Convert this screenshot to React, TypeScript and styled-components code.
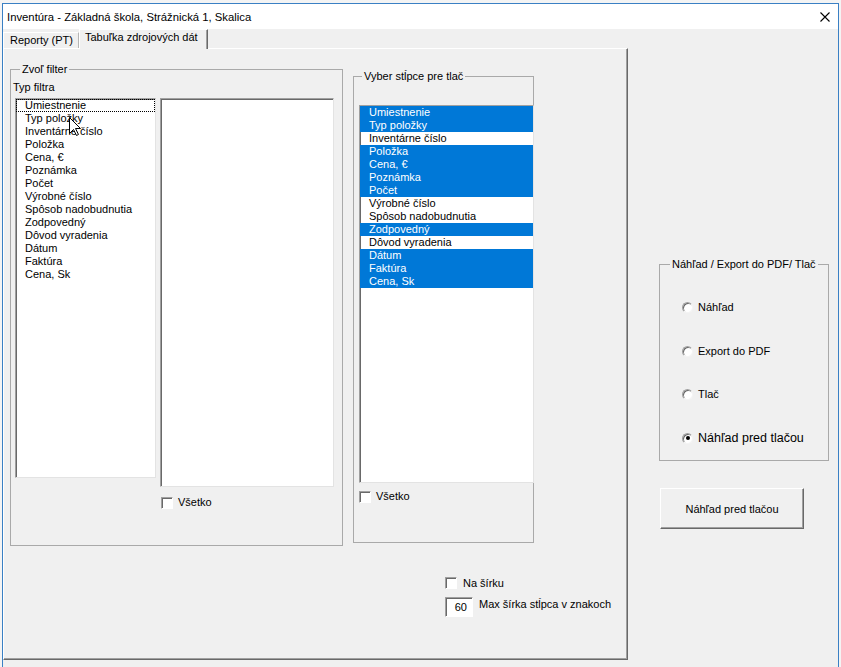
import React from 'react';
import styled, { createGlobalStyle } from 'styled-components';

const Global = createGlobalStyle`
  html, body { margin: 0; padding: 0; }
  body {
    background: #f3f3f3;
    font-family: "Liberation Sans", Arial, sans-serif;
    font-size: 11px;
    color: #000;
  }
`;

const Screen = styled.div`
  width: 841px;
  height: 667px;
  overflow: hidden;
  box-sizing: border-box;
  padding: 3px 2px 0 2px;
  background: #f4f4f4;
`;

const Window = styled.div`
  width: 837px;
  height: 700px;
  box-sizing: border-box;
  border: 1px solid #3a80c4;
  border-bottom: none;
  display: flex;
  flex-direction: column;
  background: #f0f0f0;
`;

const TitleBar = styled.div`
  height: 25px;
  flex: none;
  background: #fff;
  display: flex;
  align-items: center;
  padding-left: 4px;
  padding-right: 8px;
`;

const TitleText = styled.div`
  flex: 1;
  font-size: 11.3px;
  line-height: 14px;
  padding-top: 1px;
`;

const CloseIcon = () => (
  <svg width="10" height="10" viewBox="0 0 10 10">
    <path d="M0.5 0.5 L9.5 9.5 M9.5 0.5 L0.5 9.5" stroke="#000" strokeWidth="1.1" />
  </svg>
);

const Body = styled.div`
  flex: 1;
  display: flex;
  align-items: flex-start;
`;

const TabControl = styled.div`
  width: 625px;
  flex: none;
  display: flex;
  flex-direction: column;
`;

const TabStrip = styled.div`
  height: 19px;
  display: flex;
  align-items: flex-end;
  position: relative;
  z-index: 1;
`;

const Tab = styled.div<{ $active?: boolean }>`
  box-sizing: border-box;
  background: #f0f0f0;
  border-top: 1px solid #fff;
  border-left: 1px solid #fff;
  border-right: 1px solid ${p => (p.$active ? '#696969' : '#b5b5b5')};
  box-shadow: ${p => (p.$active ? 'inset -1px 0 0 #a0a0a0' : 'none')};
  height: ${p => (p.$active ? '20px' : '16px')};
  width: ${p => (p.$active ? '129px' : '76px')};
  margin-bottom: ${p => (p.$active ? '-1px' : '0')};
  padding: ${p => (p.$active ? '1px 0 0 5px' : '1px 0 0 6px')};
  line-height: 13px;
  white-space: nowrap;
`;

const Page = styled.div`
  height: 612px;
  box-sizing: border-box;
  border-top: 1px solid #fff;
  border-left: 1px solid #fff;
  border-right: 1px solid #696969;
  border-bottom: 1px solid #696969;
  box-shadow: inset -1px -1px 0 #a0a0a0;
  display: flex;
  align-items: flex-start;
  padding-left: 6px;
`;

const Frame = styled.fieldset<{ $w: number; $h: number; $mt: number; $ml?: number }>`
  box-sizing: border-box;
  width: ${p => p.$w}px;
  height: ${p => p.$h}px;
  margin: ${p => p.$mt}px 0 0 ${p => p.$ml ?? 0}px;
  padding: 0;
  min-width: 0;
  border: 1px solid #a9a9a9;
  flex: none;
`;

const Legend = styled.legend<{ $ml: number }>`
  margin-left: ${p => p.$ml}px;
  padding: 0 2px;
  line-height: 13px;
  font-size: 11px;
`;

const FieldLabel = styled.div`
  line-height: 13px;
  padding: 5px 0 0 2px;
`;

const ListRow = styled.div`
  display: flex;
  align-items: flex-start;
  gap: 4px;
  padding: 4px 0 0 4px;
`;

const ListColumn = styled.div`
  display: flex;
  flex-direction: column;
`;

const ListBox = styled.div<{ $w: number; $h: number; $mr?: number }>`
  position: relative;
  box-sizing: border-box;
  width: ${p => p.$w}px;
  height: ${p => p.$h}px;
  margin-right: ${p => p.$mr ?? 0}px;
  background: #fff;
  border: 1px solid;
  border-color: #a0a0a0 #e3e3e3 #e3e3e3 #a0a0a0;
  box-shadow: inset 1px 1px 0 #696969;
  overflow: hidden;
`;

const ListItem = styled.div<{ $selected?: boolean; $focused?: boolean }>`
  height: 13px;
  line-height: 13px;
  padding-left: 9px;
  white-space: nowrap;
  box-sizing: border-box;
  background: ${p => (p.$selected ? '#0078d7' : 'transparent')};
  color: ${p => (p.$selected ? '#fff' : '#000')};
  outline: ${p => (p.$focused ? '1px dotted #000' : 'none')};
  outline-offset: -1px;
  position: relative;
`;

const Cursor = styled.svg`
  position: absolute;
  left: 53px;
  top: 18px;
`;

const CheckRow = styled.label<{ $mt: number; $ml?: number }>`
  display: flex;
  align-items: center;
  gap: 5px;
  margin-top: ${p => p.$mt}px;
  margin-left: ${p => p.$ml ?? 0}px;
  line-height: 13px;
`;

const CheckBox = styled.span`
  width: 12px;
  height: 12px;
  box-sizing: border-box;
  background: #fff;
  border: 1px solid;
  border-color: #a0a0a0 #fff #fff #a0a0a0;
  box-shadow: inset 1px 1px 0 #696969;
  flex: none;
`;

const Column = styled.div`
  display: flex;
  flex-direction: column;
  margin-left: 10px;
`;

const Frame2Body = styled.div`
  padding: 22px 0 0 5px;
  display: flex;
  flex-direction: column;
`;

const Options = styled.div`
  margin: 34px 0 0 92px;
  display: flex;
  flex-direction: column;
  gap: 7px;
`;

const OptRow = styled.div`
  display: flex;
  align-items: flex-start;
  gap: 6px;
  line-height: 13px;
`;

const TextBox = styled.div`
  width: 28px;
  height: 20px;
  box-sizing: border-box;
  background: #fff;
  border: 1px solid;
  border-color: #a0a0a0 #fff #fff #a0a0a0;
  box-shadow: inset 1px 1px 0 #696969;
  text-align: right;
  padding-right: 5px;
  line-height: 19px;
`;

const OptLabel = styled.span`
  padding-top: 1px;
`;

const RightColumn = styled.div`
  margin: 229px 0 0 31px;
  display: flex;
  flex-direction: column;
  width: 170px;
`;

const RadioList = styled.div`
  display: flex;
  flex-direction: column;
  gap: 30.6px;
  padding: 30px 0 0 22px;
`;

const RadioRow = styled.label`
  display: flex;
  align-items: center;
  gap: 5px;
  height: 13px;
  line-height: 13px;
`;

const Radio = styled.span<{ $checked?: boolean }>`
  width: 11px;
  height: 11px;
  box-sizing: border-box;
  border-radius: 50%;
  background: #fff;
  border: 1px solid;
  border-color: #a0a0a0 #f4f4f4 #f4f4f4 #a0a0a0;
  box-shadow: inset 1px 1px 0 #696969;
  display: flex;
  align-items: center;
  justify-content: center;
  flex: none;
  &::after {
    content: '';
    width: 4px;
    height: 4px;
    border-radius: 50%;
    background: ${p => (p.$checked ? '#000' : 'transparent')};
  }
`;

const RadioLabel = styled.span<{ $large?: boolean }>`
  font-size: ${p => (p.$large ? '12.5px' : '11px')};
  white-space: nowrap;
`;

const Button = styled.button`
  margin: 27px 0 0 1px;
  width: 144px;
  height: 41px;
  box-sizing: border-box;
  background: #f0f0f0;
  border: 1px solid;
  border-color: #fff #696969 #696969 #fff;
  box-shadow: inset -1px -1px 0 #a0a0a0;
  font-family: "Liberation Sans", Arial, sans-serif;
  font-size: 11px;
  color: #000;
  padding: 0;
`;

const items = [
  'Umiestnenie',
  'Typ položky',
  'Inventárne číslo',
  'Položka',
  'Cena, €',
  'Poznámka',
  'Počet',
  'Výrobné číslo',
  'Spôsob nadobudnutia',
  'Zodpovedný',
  'Dôvod vyradenia',
  'Dátum',
  'Faktúra',
  'Cena, Sk',
];
const selected = [true, true, false, true, true, true, true, false, false, true, false, true, true, true];

const radios = [
  { label: 'Náhľad' },
  { label: 'Export do PDF' },
  { label: 'Tlač' },
  { label: 'Náhľad pred tlačou', checked: true, large: true },
];

export default function App() {
  return (
    <Screen>
      <Global />
      <Window>
        <TitleBar>
          <TitleText>Inventúra - Základná škola, Strážnická 1, Skalica</TitleText>
          <CloseIcon />
        </TitleBar>
        <Body>
          <TabControl>
            <TabStrip>
              <Tab>Reporty (PT)</Tab>
              <Tab $active>Tabuľka zdrojových dát</Tab>
            </TabStrip>
            <Page>
              <Frame $w={333} $h={483} $mt={14}>
                <Legend $ml={9}>Zvoľ filter</Legend>
                <FieldLabel>Typ filtra</FieldLabel>
                <ListRow>
                  <ListBox $w={141} $h={380}>
                    {items.map((it, i) => (
                      <ListItem key={it} $focused={i === 0}>
                        {it}
                      </ListItem>
                    ))}
                    <Cursor width="13" height="20" viewBox="0 0 13 20">
                      <path
                        d="M0.5 0.5 L0.5 16.5 L4.5 12.5 L7.5 18.5 L9.5 17.5 L6.5 11.5 L11.5 11.5 Z"
                        fill="#fff"
                        stroke="#000"
                        strokeWidth="1"
                      />
                    </Cursor>
                  </ListBox>
                  <ListColumn>
                    <ListBox $w={174} $h={389} />
                    <CheckRow $mt={9} $ml={1}>
                      <CheckBox />
                      <span>Všetko</span>
                    </CheckRow>
                  </ListColumn>
                </ListRow>
              </Frame>
              <Column>
                <Frame $w={181} $h={473} $mt={21}>
                  <Legend $ml={8}>Vyber stĺpce pre tlač</Legend>
                  <Frame2Body>
                    <ListBox $w={175} $h={378} $mr={-1}>
                      {items.map((it, i) => (
                        <ListItem key={it} $selected={selected[i]}>
                          {it}
                        </ListItem>
                      ))}
                    </ListBox>
                    <CheckRow $mt={7}>
                      <CheckBox />
                      <span>Všetko</span>
                    </CheckRow>
                  </Frame2Body>
                </Frame>
                <Options>
                  <OptRow>
                    <CheckBox />
                    <span>Na šírku</span>
                  </OptRow>
                  <OptRow>
                    <TextBox>60</TextBox>
                    <OptLabel>Max šírka stĺpca v znakoch</OptLabel>
                  </OptRow>
                </Options>
              </Column>
            </Page>
          </TabControl>
          <RightColumn>
            <Frame $w={170} $h={203} $mt={0}>
              <Legend $ml={10}>Náhľad / Export do PDF/ Tlač</Legend>
              <RadioList>
                {radios.map(r => (
                  <RadioRow key={r.label}>
                    <Radio $checked={r.checked} />
                    <RadioLabel $large={r.large}>{r.label}</RadioLabel>
                  </RadioRow>
                ))}
              </RadioList>
            </Frame>
            <Button>Náhľad pred tlačou</Button>
          </RightColumn>
        </Body>
      </Window>
    </Screen>
  );
}
